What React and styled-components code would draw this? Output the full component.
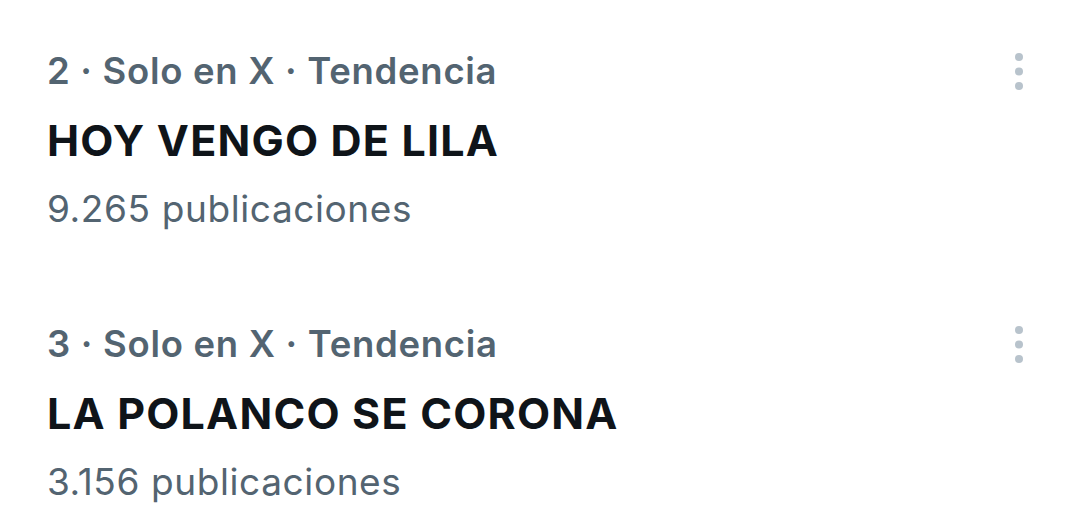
import styled, { createGlobalStyle } from "styled-components";

const GlobalStyle = createGlobalStyle`
  html, body {
    margin: 0;
    padding: 0;
    background: #ffffff;
  }
  body {
    font-family: Inter, Roboto, "Liberation Sans", sans-serif;
    -webkit-font-smoothing: antialiased;
  }
`;

const List = styled.div`
  display: flex;
  flex-direction: column;
  gap: 87px;
  padding: 47px 56px 0 47px;
`;

const Trend = styled.div`
  display: flex;
  align-items: flex-start;
  justify-content: space-between;
`;

const Body = styled.div`
  display: flex;
  flex-direction: column;
`;

const Meta = styled.div`
  font-size: 36.5px;
  line-height: 48px;
  font-weight: 600;
  letter-spacing: 0.7px;
  color: #536471;
`;

const Title = styled.div`
  margin-top: 17px;
  font-size: 43px;
  line-height: 56px;
  font-weight: 700;
  letter-spacing: 1.2px;
  color: #0f1419;
`;

const Count = styled.div`
  margin-top: 17px;
  font-size: 37px;
  line-height: 48px;
  font-weight: 400;
  letter-spacing: 0.6px;
  color: #536471;
`;

const MoreButton = styled.button`
  margin-top: 5px;
  padding: 0;
  border: none;
  background: none;
  display: flex;
  color: #b8c3cc;
`;

function MoreIcon() {
  return (
    <svg width="10" height="40" viewBox="0 0 10 40" fill="currentColor">
      <circle cx="5" cy="5" r="4" />
      <circle cx="5" cy="19.5" r="4" />
      <circle cx="5" cy="34" r="4" />
    </svg>
  );
}

const trends = [
  { rank: 2, name: "HOY VENGO DE LILA", posts: "9.265" },
  { rank: 3, name: "LA POLANCO SE CORONA", posts: "3.156" },
];

export default function App() {
  return (
    <>
      <GlobalStyle />
      <List>
        {trends.map((t) => (
          <Trend key={t.rank}>
            <Body>
              <Meta>{t.rank} · Solo en X · Tendencia</Meta>
              <Title>{t.name}</Title>
              <Count>{t.posts} publicaciones</Count>
            </Body>
            <MoreButton aria-label="Más opciones">
              <MoreIcon />
            </MoreButton>
          </Trend>
        ))}
      </List>
    </>
  );
}
